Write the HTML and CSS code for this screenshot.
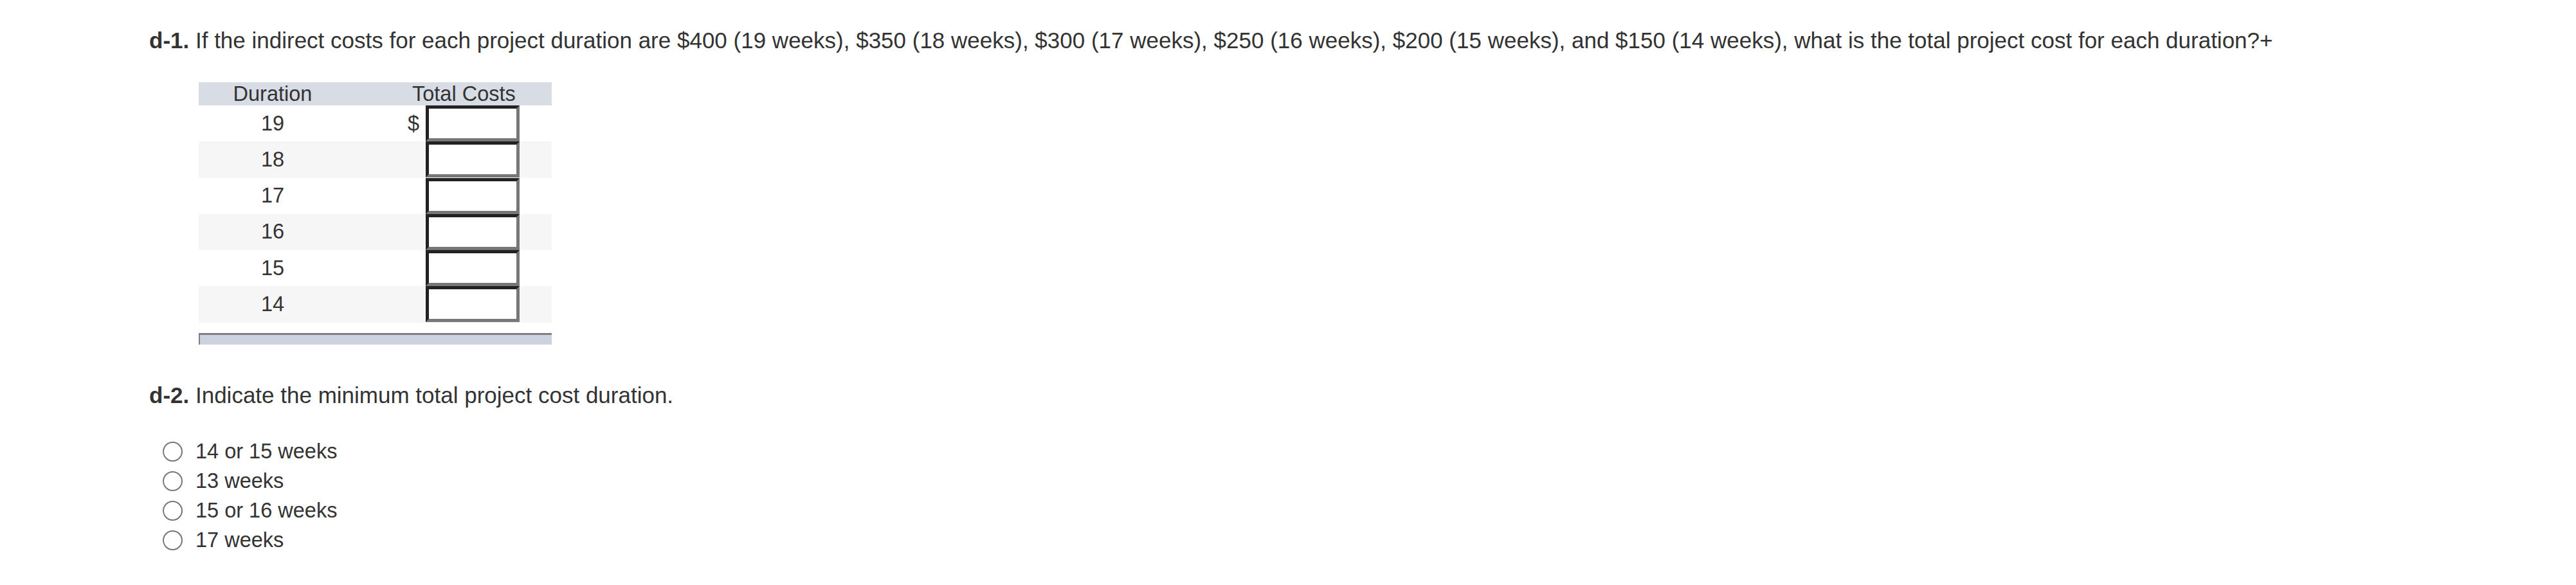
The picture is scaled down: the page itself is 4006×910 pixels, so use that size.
FILE: index.html
```html
<!DOCTYPE html>
<html>
<head>
<meta charset="utf-8">
<link rel="stylesheet" href="styles.css">
</head>
<body>
<div class="page">
  <p class="question"><b>d-1.</b> If the indirect costs for each project duration are $400 (19 weeks), $350 (18 weeks), $300 (17 weeks), $250 (16 weeks), $200 (15 weeks), and $150 (14 weeks), what is the total project cost for each duration?+</p>

  <div class="grid">
    <div class="row head">
      <div class="c1">Duration</div>
      <div class="c2 headcost">Total Costs</div>
    </div>
    <div class="row">
      <div class="c1">19</div>
      <div class="c2"><span class="dollar">$</span><span class="box"></span></div>
    </div>
    <div class="row alt">
      <div class="c1">18</div>
      <div class="c2"><span class="dollar"></span><span class="box"></span></div>
    </div>
    <div class="row">
      <div class="c1">17</div>
      <div class="c2"><span class="dollar"></span><span class="box"></span></div>
    </div>
    <div class="row alt">
      <div class="c1">16</div>
      <div class="c2"><span class="dollar"></span><span class="box"></span></div>
    </div>
    <div class="row">
      <div class="c1">15</div>
      <div class="c2"><span class="dollar"></span><span class="box"></span></div>
    </div>
    <div class="row alt">
      <div class="c1">14</div>
      <div class="c2"><span class="dollar"></span><span class="box"></span></div>
    </div>
    <div class="foot"></div>
  </div>

  <p class="question q2"><b>d-2.</b> Indicate the minimum total project cost duration.</p>

  <div class="options">
    <div class="opt"><span class="radio"></span><span>14 or 15 weeks</span></div>
    <div class="opt"><span class="radio"></span><span>13 weeks</span></div>
    <div class="opt"><span class="radio"></span><span>15 or 16 weeks</span></div>
    <div class="opt"><span class="radio"></span><span>17 weeks</span></div>
  </div>
</div>
</body>
</html>
```

FILE: styles.css
```css
html, body {
  margin: 0;
  padding: 0;
  background: #ffffff;
}
body {
  font-family: "Liberation Sans", Arial, sans-serif;
  color: #333333;
}
.page {
  padding: 43px 0 0 232px;
}
.question {
  margin: 0;
  font-size: 35px;
  line-height: 40px;
  white-space: nowrap;
}
.question b {
  font-weight: bold;
}
.grid {
  margin: 45px 0 0 77px;
  width: 549px;
  font-size: 32.5px;
}
.row {
  display: flex;
  height: 56.25px;
  align-items: center;
}
.row.alt {
  background: #f6f6f6;
}
.row.head {
  height: 36px;
  background: #d8dce5;
  line-height: 36px;
}
.c1 {
  width: 230px;
  text-align: center;
}
.c2 {
  flex: 1;
  display: flex;
  align-items: center;
  height: 100%;
  padding-left: 95px;
}
.headcost {
  padding-left: 102px;
}
.dollar {
  width: 19px;
  text-align: left;
}
.box {
  box-sizing: border-box;
  width: 146px;
  height: 56px;
  margin-left: 9px;
  background: #ffffff;
  border-style: solid;
  border-width: 5px;
  border-color: #222222 #777777 #777777 #222222;
}
.foot {
  box-sizing: border-box;
  margin-top: 16px;
  height: 18px;
  background: #ccd3df;
  border-top: 3px solid #7e7f87;
  border-left: 2px solid #7e7f87;
}
.q2 {
  margin-top: 59px;
}
.options {
  margin-top: 45px;
  font-size: 32.5px;
}
.opt {
  display: flex;
  align-items: center;
  height: 46px;
  padding-left: 21px;
}
.radio {
  box-sizing: border-box;
  width: 31px;
  height: 31px;
  border: 2.5px solid #767676;
  border-radius: 50%;
  background: #ffffff;
  margin-right: 20px;
}
```
